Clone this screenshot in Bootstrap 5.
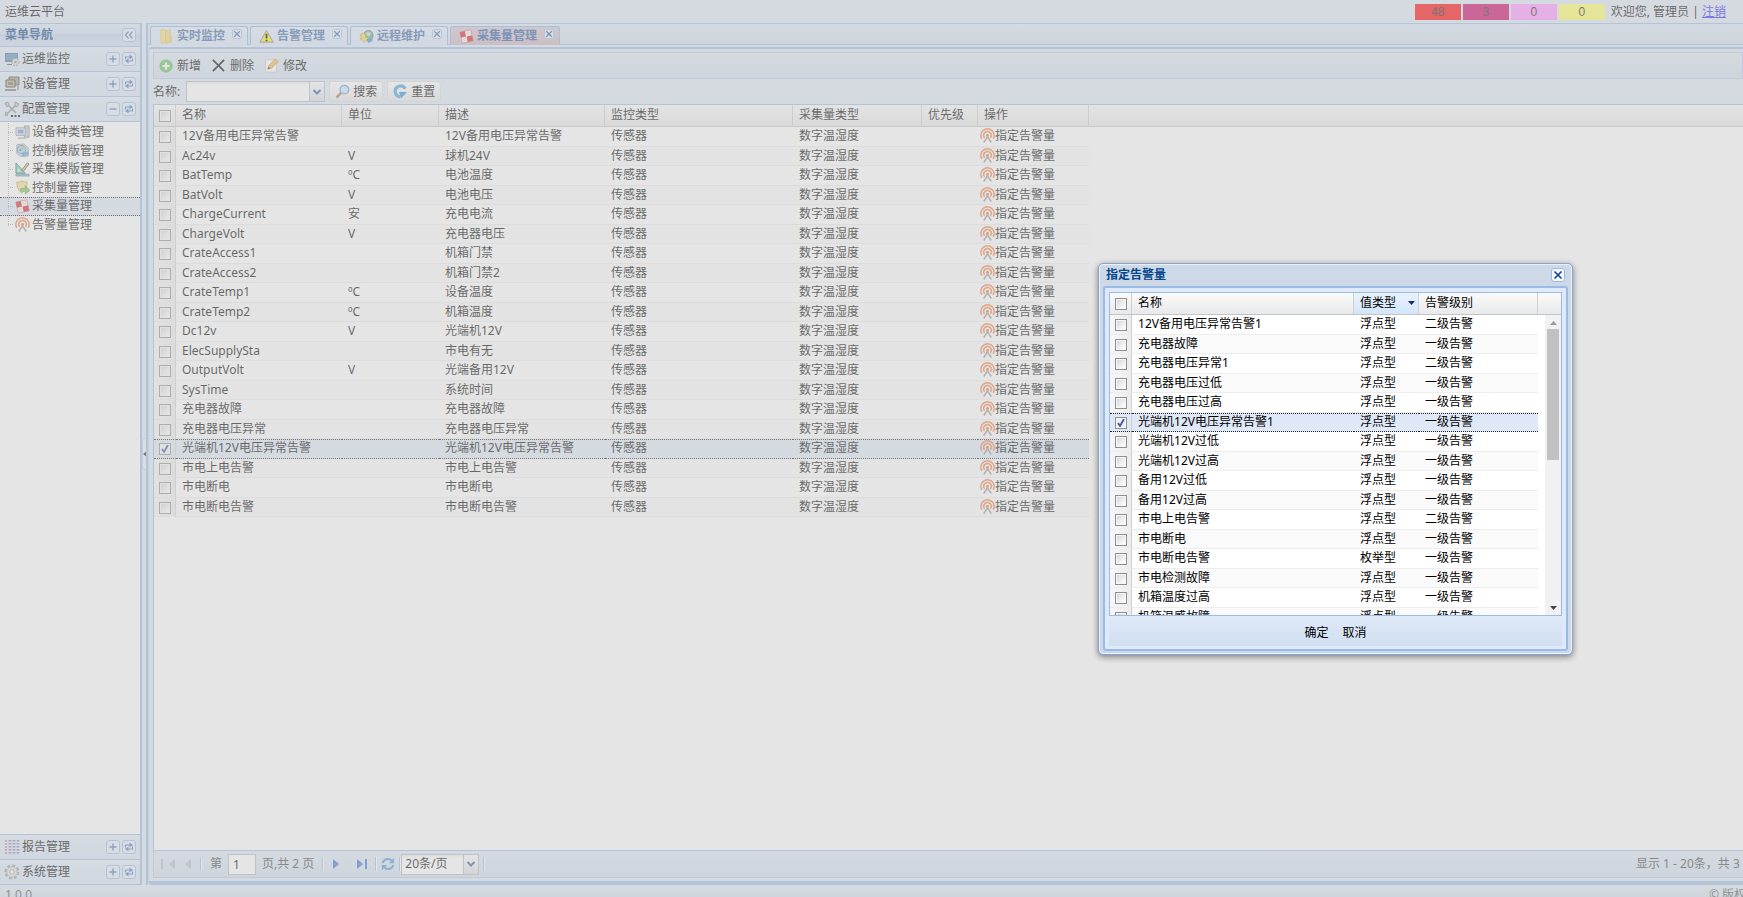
<!DOCTYPE html>
<html lang="zh-CN">
<head>
<meta charset="utf-8">
<meta name="viewport" content="width=device-width, initial-scale=1">
<title>运维云平台</title>
<link rel="stylesheet" href="https://cdn.jsdelivr.net/npm/bootstrap@5.3.0/dist/css/bootstrap.min.css">
<style>
  :root { --line: #99bbe8; --pane: #dfe8f6; --title: #15498b; }
  body { font: 12px/16px "Noto Sans", "Noto Sans CJK SC", sans-serif; color: #000; background: var(--pane); }
  svg { display: block; flex: none; }
  button { font: inherit; color: inherit; }
  .topbar { height: 23px; padding: 0 17px 0 5px; }
  .count { width: 46px; height: 16px; margin-right: 2px; text-align: center; font-family: "Liberation Sans", sans-serif; color: #222; }
  .c-crit { background: #ff0000; } .c-major { background: #cb0064; } .c-minor { background: #ff94ff; } .c-info { background: #ffff68; }
  .topbar a { color: #2a20ff; }

  .side { width: 142px; border-top: 1px solid var(--line); border-right: 2px solid var(--line); background: #fff; }
  .side-title { height: 23px; padding: 0 4px 0 5px; border-bottom: 1px solid var(--line); color: var(--title); font-weight: 700;
    background: linear-gradient(#dae7f6, #cddef3 45%, #bfd4ee 46%, #cddef2); }
  .acc { height: 25px; padding: 0 4px; border-bottom: 1px solid var(--line); background: linear-gradient(#e6effa, #dce8f6 20%, #d7e4f4); }
  .acc-low { height: 26px; border-top: 1px solid var(--line); }
  .acc span { margin: 0 auto 0 2px; }
  .tool { width: 14px; height: 14px; padding: 0; margin-left: 2px; border: 1px solid #9dbbe0; border-radius: 3px; background: #e3eefb; color: #4a7ab8;
    display: flex; align-items: center; justify-content: center; }
  .tree { height: 111px; margin: 1px 0 0; padding: 0; position: relative; }
  .tree::before { content: ""; position: absolute; left: 8px; top: 0; height: 103px; border-left: 1px dotted #aaa; }
  .tree li { flex: 1 1 0; min-height: 0; padding-left: 15px; gap: 2px; border: 1px dotted transparent; border-width: 1px 0; }
  .tree li::before { content: ""; width: 5px; margin: 0 0 0 -7px; border-top: 1px dotted #aaa; }
  .tree li.on { background: #dfe8f6; border-color: #111; }

  .splitter { width: 4px; background: var(--pane); }
  .handle { width: 5px; height: 32px; border-radius: 3px 0 0 3px; background: #e8f0fb; border: 1px solid #c3d3ea; border-right: 0; }
  .main { border-top: 1px solid var(--line); border-left: 2px solid var(--line); overflow: hidden; }
  .tabs { height: 21px; padding: 2px 0 0 2px; gap: 2px; background: linear-gradient(#dbe8f8, #d1dff0); border-bottom: 1px solid var(--line); }
  .tab-x { height: 19px; padding: 0 5px 0 8px; gap: 3px; border: 1px solid #8db2e3; border-bottom: 0; border-radius: 3px 3px 0 0;
    color: #416aa3; font-weight: 700; background: linear-gradient(#e3eefc, #d6e5f8); }
  .tab-x.on { background: linear-gradient(#d4c4d2, #c8b2bc); color: #2a5aa0; }
  .tab-x i { width: 10px; height: 10px; margin: 0 0 4px 4px; border: 1px solid #a8c2e4; border-radius: 2px; background: #e6f0fc; }
  .content { border-top: 2px solid var(--line); border-left: 1px solid #c3d6ef; border-bottom: 4px solid var(--line); margin-top: 2px; padding: 3px 0 3px 4px; border-radius: 4px 0 0 4px; }
  .bar { height: 27px; border: 1px solid #b4c8e4; background: linear-gradient(#dce8f4, #d0deec); padding-left: 5px; gap: 10px; }
  .flat { border: 0; background: none; padding: 0; gap: 4px; }
  .search { height: 25px; }
  .search label { margin-right: 6px; }
  .push { height: 21px; padding: 0 5px; gap: 3px; border: 1px solid #dcdcdc; border-radius: 3px; background: linear-gradient(#fff, #f4f4f4 50%, #e6e6e6); }
  .combo { position: relative; }
  .combo select { appearance: none; height: 21px; border: 1px solid #b5b8c8; border-radius: 0; padding: 0 20px 0 3px; background: linear-gradient(#eee, #fff 4px); width: 139px; color: #000; }
  .combo span { position: absolute; right: 0; top: 0; width: 16px; height: 21px; border: 1px solid #b5b8c8; background: linear-gradient(#fafbfc, #d9dee6); display: flex; align-items: center; justify-content: center; pointer-events: none; }
  .gridbox { border-top: 1px solid var(--line); border-left: 1px solid var(--line); background: #fff; }
  .heads { height: 22px; border-bottom: 1px solid #c5c5c5; background: linear-gradient(#fbfbfb, #e8e9eb); }

  .grid { table-layout: fixed; border-collapse: separate; border-spacing: 0; }
  .grid th { font-weight: 400; height: 21px; padding: 0 0 1px 6px; border-right: 1px solid #cfcfcf; vertical-align: middle; line-height: 16px; }
  .grid td { padding: 1px 0 0 6px; line-height: 15px; border: solid #ededed; border-width: 0 0 1px; white-space: nowrap; vertical-align: top; }
  .grid tr:nth-child(even) td { background: #fafafa; }
  .grid tbody td:first-child { background: linear-gradient(90deg, #f7f7f7, #ececec); border-right: 1px solid #d0d0d0; }
  .grid tr > :first-child { padding-left: 5px; }
  .grid tbody tr.on td, .grid tbody tr.on td:first-child { background: #dfe8f6; border-bottom: 1px dotted #222; border-top: 1px dotted #222; line-height: 15px; padding-top: 0; }
  .grid tr.on input { margin-top: 3px; }
  .list-main { width: 935px; }
  .grid input { appearance: none; display: block; width: 12px; height: 12px; margin: 3px 0 0; border: 1px solid #8e8f8f; border-radius: 0;
    background: linear-gradient(135deg, #cfd3d8, #fbfbfb 80%); box-shadow: inset 0 0 0 1px #f6f6f6; }
  .grid th input { margin: 2px 0 0; }
  .grid input:checked { background: #eef2f8 url("data:image/svg+xml,%3Csvg xmlns='http://www.w3.org/2000/svg' viewBox='0 0 10 10'%3E%3Cpath d='M2 5l2 3 4-7' fill='none' stroke='%234056a0' stroke-width='1.8'/%3E%3C/svg%3E") center/10px; }
  .act { color: #000; text-decoration: none; display: flex; align-items: center; height: 15px; margin-left: -4px; }

  .pager { height: 28px; border: 1px solid #b4c8e4; border-top-color: var(--line); border-right: 0; background: linear-gradient(#dce8f4, #d0deec); padding-left: 7px; color: #444; }
  .pager input { width: 28px; height: 21px; border: 1px solid #b5b8c8; padding: 0 4px; margin: 0 6px; }
  .rule { width: 2px; height: 14px; border-left: 1px solid var(--line); border-right: 1px solid #fff; }
  .pager .combo select { width: 78px; }
  .total { width: 107px; white-space: nowrap; }
  .foot { height: 12px; padding: 2px 0 0 5px; background: linear-gradient(#e2ecf6, #d0deec); color: #555; overflow: hidden; }
  .foot span:last-child { width: 34px; white-space: nowrap; }

  .veil { background: rgba(204, 204, 204, .5); z-index: 10; }
  .dlg { position: absolute; left: 63%; top: 263px; width: 475px; z-index: 20; border: 1px solid #88a6cc; border-radius: 5px; background: #ced9e7;
    box-shadow: 0 2px 6px rgba(0,0,0,.45), inset 0 0 0 1px #e8f0fa; padding: 0 4px 3px; }
  .dlg-title { height: 22px; padding: 0 3px 0 3px; color: #04468c; font-weight: 700; }
  .dlg-title .tool { color: #14409a; background: #f2f7fe; }
  .dlg-body { border: 2px solid var(--line); border-radius: 3px; background: #dfe9f7; padding: 4px 4px 3px; }
  .dlg-grid { border: 1px solid var(--line); background: #fff; height: 324px; overflow: hidden; }
  .dlg-head, .dlg-list { width: 428px; }
  .scroll { height: 301px; overflow: hidden; }
  .track { width: 16px; background: #f1f1f1; padding: 6px 0; }
  .thumb { width: 12px; height: 131px; background: #c1c1c1; }
  .grid .hot { background: linear-gradient(#eaf3fe, #d3e5fb); }
  .hot svg { margin-right: 3px; }
  .acts { height: 30px; padding-top: 4px; gap: 14px; background: linear-gradient(#dfe9f7, #d0dff1); }
</style>
</head>
<body class="vh-100 overflow-hidden d-flex flex-column position-relative">

<svg width="0" height="0" class="position-absolute" aria-hidden="true">
  <symbol id="monitor" viewBox="0 0 16 16"><path d="M1 2h13v9H1z" fill="#4b6f93"/><path d="M2 3h11v6H2z" fill="#5d92bf"/><path d="M3 13h5v1H3z" fill="#556"/><circle cx="11.5" cy="11" r="3.6" fill="#ddd" stroke="#888"  stroke-dasharray="2 1"/><circle cx="11.5" cy="11" r="1.3" fill="#888"/></symbol>
  <symbol id="device" viewBox="0 0 16 16"><path d="M5 1h10v8H5z" fill="#9a9788" stroke="#555"/><path d="M2 4h9v7H2z" fill="#bdb38d" stroke="#45412f"/><path d="M4 6h5v3H4z" fill="#7b785f"/><path d="M1 13h11v2H1z" fill="#777"/><path d="M13 10h2v4h-2z" fill="#999"/></symbol>
  <symbol id="tools" viewBox="0 0 16 16"><path d="M4 4l8 8M12 4l-8 8" stroke="#8a8a8a" stroke-width="1.600"/><path d="M1 2l3-1 1 3-2 2zM11 1l4 2-2 3-2-1zM2 11l2 1-1 3-2-1z" fill="#c4c4c4" stroke="#777" stroke-width=".8"/><path d="M7 14h2v2H7zM10.500 14h2v2h-2zM14 14h2v2h-2z" fill="#111"/></symbol>
  <symbol id="report" viewBox="0 0 16 16"><path d="M2 1v14" stroke="#c77" stroke-width="1.500" stroke-dasharray="2 1"/><path d="M6 1v14M10 1v14M14 1v14" stroke="#8080b8" stroke-width="2.800" stroke-dasharray="1.500 1.500"/></symbol>
  <symbol id="gear" viewBox="0 0 16 16"><circle cx="8" cy="8" r="6.5" fill="none" stroke="#999" stroke-width="2" stroke-dasharray="3 2"/><circle cx="8" cy="8" r="5.3" fill="#e4e4e4" stroke="#aaa"/><circle cx="8" cy="8" r="2.3" fill="#fff" stroke="#999"/></symbol>
  <symbol id="pc" viewBox="0 0 16 16"><path d="M10 1h5v12h-5z" fill="#c5c8cd" stroke="#8b9099"/><path d="M1 3h10v8H1z" fill="#dfe3e8" stroke="#8d97a8"/><path d="M3 5h6v4H3z" fill="#6a9ad6"/><path d="M3 13h9v2H3z" fill="#bbb"/></symbol>
  <symbol id="disc" viewBox="0 0 16 16"><path d="M2 2l7-1 5 4v9H5l-3-3z" fill="#dde6ef" stroke="#8090a5"/><circle cx="7" cy="7" r="4.500" fill="#a8d2f0" stroke="#5987b5"/><circle cx="8" cy="5" r="1.500" fill="#f2a14c"/><circle cx="5.500" cy="7.500" r="1.200" fill="#4fa050"/><path d="M7 10l7-1 1 3-7 3z" fill="#6b9ad0"/></symbol>
  <symbol id="ruler" viewBox="0 0 16 16"><path d="M1 1l10 11H1z" fill="#7bcfb0" stroke="#278064"/><path d="M3 7l3 3H3z" fill="#fff"/><path d="M7 9l6-8 2 1-6 8z" fill="#e8c95c" stroke="#555"/><path d="M1 13h14v2H1z" fill="#9bc" stroke="#456" stroke-width=".6"/></symbol>
  <symbol id="shield" viewBox="0 0 16 16"><path d="M2 2q3 1 5-1 3 2 6 1 0 8-6 12Q2 10 2 2z" fill="#f4e290" stroke="#c8a53c"/><path d="M6 9h5V6l5 5-5 4v-3H6z" fill="#7fc35b" stroke="#4e9133" stroke-width=".7"/></symbol>
  <symbol id="cube" viewBox="0 0 16 16"><g transform="rotate(-12 8 8)"><path d="M2 2h12v12H2z" fill="#fff" stroke="#c66" stroke-width=".7"/><path d="M2 2h5.500v6H2zM8 8h6v6H8z" fill="#d8202c"/><path d="M8.500 3H13v4H8.500zM3 9h4v4H3z" fill="#f6e4e4"/></g></symbol>
  <symbol id="signal" viewBox="0 0 16 16"><path d="M2 11.500A7 7 0 1 1 14 11.500M5 10.500A4 4 0 1 1 11 10.500" fill="none" stroke="#f0844c" stroke-width="1.700"/><circle cx="8" cy="8" r="1.500" fill="#e56a2c"/><path d="M8 9.500l-4 6M8 9.500l4 6" fill="none" stroke="#999" stroke-width="1.700"/></symbol>
  <symbol id="folder" viewBox="0 0 16 16"><path d="M2 1h5v14H2z" fill="#f7dd82" stroke="#e8c866"/><path d="M7 2l5-1v13l-5 1z" fill="#f6d77c" stroke="#e4bf58"/><path d="M11 8h3v6h-3z" fill="#ecc860"/></symbol>
  <symbol id="warn" viewBox="0 0 16 16"><path d="M8 1.500L15 14H1z" fill="#ffee10" stroke="#777" stroke-linejoin="round"/><path d="M8 5v5M8 11.500v1.500" stroke="#000" stroke-width="2"/></symbol>
  <symbol id="globe" viewBox="0 0 16 16"><circle cx="10" cy="6.500" r="5" fill="#6fb04c" stroke="#4a7f9f"/><path d="M8 3l5 1-2 4-3-1z" fill="#b8d9ef"/><path d="M1 6q3-3 6 0v3h3l-4 5-5-4h2z" fill="#f0e050" stroke="#a39b2d" stroke-width=".7"/><path d="M8 12l7-4-1 5-4 2z" fill="#3f8bd0"/></symbol>
  <symbol id="add" viewBox="0 0 16 16"><circle cx="8" cy="8" r="7" fill="#6cc260" stroke="#3c9a3a" stroke-width=".8"/><path d="M8 4v8M4 8h8" stroke="#fff" stroke-width="2.400"/></symbol>
  <symbol id="cross" viewBox="0 0 16 16"><path d="M2 2l12 12M14 2L2 14" stroke="#000" stroke-width="1.800"/></symbol>
  <symbol id="edit" viewBox="0 0 16 16"><path d="M1.500 2h12v13h-12z" fill="#fff" stroke="#c8c8c8"/><path d="M4 12l1-4 7-7 3 3-7 7z" fill="#f5b84c" stroke="#b9822e" stroke-width=".7"/><path d="M4 12l1-3 2 2z" fill="#444"/></symbol>
  <symbol id="find" viewBox="0 0 16 16"><path d="M1.500 14.500L7 9" stroke="#b07a4c" stroke-width="2.600"/><circle cx="10" cy="6" r="4.600" fill="#cfe8fb" stroke="#5a9bd8" stroke-width="1.400"/></symbol>
  <symbol id="reset" viewBox="0 0 16 16"><path d="M13 5A5.700 5.700 0 1 0 8 13.500" fill="none" stroke="#46a2e4" stroke-width="3.400"/><path d="M15 8.500H6.500l2 7z" fill="#318fd8"/></symbol>
  <symbol id="reload" viewBox="0 0 16 16"><path d="M2 7a6 6 0 0 1 10-3M14 9a6 6 0 0 1-10 3" fill="none" stroke="#4b93d6" stroke-width="2.400"/><path d="M15 1v6H9zM1 15V9h6z" fill="#4b93d6"/></symbol>
  <symbol id="swap" viewBox="0 0 10 10"><path d="M1.500 5.500V3H6M8.500 4.500V7H4" fill="none" stroke="currentColor" stroke-width="1.100"/><path d="M5.500 .5L9 3 5.500 5.500zM4.500 4.500L1 7l3.500 2.500z" fill="currentColor"/></symbol>
  <symbol id="plus" viewBox="0 0 10 10"><path d="M5 1.500v7M1.500 5h7" stroke="currentColor" stroke-width="1.400"/></symbol>
  <symbol id="minus" viewBox="0 0 10 10"><path d="M1.500 5h7" stroke="currentColor" stroke-width="1.400"/></symbol>
  <symbol id="fold" viewBox="0 0 10 10"><path d="M4.500 1.500L1.500 5l3 3.500M8.500 1.500L5.500 5l3 3.500" fill="none" stroke="currentColor" stroke-width="1.300"/></symbol>
  <symbol id="shut" viewBox="0 0 10 10"><path d="M1.500 1.500l7 7M8.500 1.500l-7 7" stroke="currentColor" stroke-width="1.600"/></symbol>
  <symbol id="down" viewBox="0 0 10 10"><path d="M1.500 3L5 6.500 8.500 3" fill="none" stroke="#3a5a90" stroke-width="2"/></symbol>
  <symbol id="prev" viewBox="0 0 8 12"><path d="M7 1v10L1 6z" fill="#b4bac6"/></symbol>
  <symbol id="next" viewBox="0 0 8 12"><path d="M1 1v10l6-5z" fill="#3f6fe0"/></symbol>
</svg>

<header class="topbar d-flex align-items-center flex-shrink-0">
  <span class="me-auto">运维云平台</span>
  <span class="count c-crit">48</span><span class="count c-major">3</span><span class="count c-minor">0</span><span class="count c-info">0</span>
  <span class="ms-1">欢迎您, 管理员 | <a href="#">注销</a></span>
</header>

<div class="d-flex flex-grow-1" style="min-height:0">
  <nav class="side d-flex flex-column flex-shrink-0">
    <div class="side-title d-flex align-items-center justify-content-between">菜单导航
      <button class="tool" aria-label="收起"><svg width="10" height="10"><use href="#fold"/></svg></button></div>
    <div class="acc d-flex align-items-center" data-icon="monitor">运维监控</div>
    <div class="acc d-flex align-items-center" data-icon="device">设备管理</div>
    <div class="acc d-flex align-items-center" data-icon="tools" data-open>配置管理</div>
    <div class="flex-grow-1">
      <ul class="tree list-unstyled d-flex flex-column" id="tree"></ul>
    </div>
    <div class="acc acc-low d-flex align-items-center" data-icon="report">报告管理</div>
    <div class="acc d-flex align-items-center" data-icon="gear">系统管理</div>
  </nav>

  <div class="splitter d-flex align-items-center flex-shrink-0">
    <div class="handle d-flex align-items-center"><svg width="4" height="6" viewBox="0 0 4 6"><path d="M4 0v6L0 3z" fill="#222"/></svg></div>
  </div>

  <main class="main d-flex flex-column flex-grow-1">
    <div class="tabs d-flex flex-shrink-0" id="tabs"></div>
    <section class="content d-flex flex-column flex-grow-1" style="min-height:0">
      <div class="bar d-flex align-items-center flex-shrink-0">
        <button class="flat d-flex align-items-center"><svg width="14" height="14"><use href="#add"/></svg>新增</button>
        <button class="flat d-flex align-items-center"><svg width="15" height="15"><use href="#cross"/></svg>删除</button>
        <button class="flat d-flex align-items-center"><svg width="15" height="15"><use href="#edit"/></svg>修改</button>
      </div>
      <form class="search d-flex align-items-center flex-shrink-0">
        <label for="nm">名称:</label>
        <div class="combo"><select id="nm"><option></option></select><span><svg width="10" height="10"><use href="#down"/></svg></span></div>
        <button type="button" class="push d-flex align-items-center ms-1"><svg width="15" height="15"><use href="#find"/></svg>搜索</button>
        <button type="button" class="push d-flex align-items-center ms-1"><svg width="15" height="15"><use href="#reset"/></svg>重置</button>
      </form>
      <div class="gridbox flex-grow-1 overflow-hidden">
        <div class="heads">
          <table class="grid list-main"><colgroup><col width="22"><col width="166"><col width="97"><col width="166"><col width="188"><col width="129"><col width="56"><col width="111"></colgroup>
            <thead><tr><th><input type="checkbox" aria-label="全选"></th><th>名称</th><th>单位</th><th>描述</th><th>监控类型</th><th>采集量类型</th><th>优先级</th><th>操作</th></tr></thead></table>
        </div>
        <table class="grid list-main" height="390"><colgroup><col width="22"><col width="166"><col width="97"><col width="166"><col width="188"><col width="129"><col width="56"><col width="111"></colgroup>
          <tbody id="rows"></tbody></table>
      </div>
      <div class="pager d-flex align-items-center flex-shrink-0">
        <button class="flat d-flex gap-1" aria-label="首页"><svg width="3" height="12" viewBox="0 0 3 12"><path d="M0 1h2v10H0z" fill="#b4bac6"/></svg><svg width="8" height="12"><use href="#prev"/></svg></button>
        <button class="flat ms-2" aria-label="上一页"><svg width="8" height="12"><use href="#prev"/></svg></button>
        <div class="rule mx-2"></div>
        <label for="pg">第</label><input id="pg" type="text" value="1"><span>页,共 2 页</span>
        <div class="rule mx-2"></div>
        <button class="flat" aria-label="下一页"><svg width="8" height="12"><use href="#next"/></svg></button>
        <button class="flat d-flex gap-0 ms-3" aria-label="末页"><svg width="8" height="12"><use href="#next"/></svg><svg width="3" height="12" viewBox="0 0 3 12"><path d="M1 1h2v10H1z" fill="#3f6fe0"/></svg></button>
        <div class="rule ms-2 me-1"></div>
        <button class="flat" aria-label="刷新"><svg width="14" height="14"><use href="#reload"/></svg></button>
        <div class="rule ms-1"></div>
        <div class="combo"><select aria-label="每页条数"><option>20条/页</option></select><span><svg width="10" height="10"><use href="#down"/></svg></span></div>
        <div class="rule ms-1"></div>
        <div class="total ms-auto">显示 1 - 20条，共 3</div>
      </div>
    </section>
  </main>
</div>
<footer class="foot d-flex justify-content-between flex-shrink-0"><span>1.0.0</span><span>© 版权</span></footer>

<div class="veil position-absolute top-0 start-0 w-100 h-100"></div>

<div class="dlg" role="dialog" aria-labelledby="dt">
  <div class="dlg-title d-flex align-items-center justify-content-between"><span id="dt">指定告警量</span>
    <button class="tool" aria-label="关闭"><svg width="10" height="10"><use href="#shut"/></svg></button></div>
  <div class="dlg-body">
    <div class="dlg-grid">
      <div class="heads">
        <table class="grid dlg-head"><colgroup><col width="22"><col width="222"><col width="65"><col width="119"></colgroup>
          <thead><tr><th><input type="checkbox" aria-label="全选"></th><th>名称</th><th class="hot"><div class="d-flex align-items-center justify-content-between">值类型<svg width="7" height="4" viewBox="0 0 7 4"><path d="M0 0h7L3.500 4z" fill="#15306c"/></svg></div></th><th>告警级别</th></tr></thead></table>
      </div>
      <div class="scroll d-flex justify-content-between">
        <table class="grid dlg-list" height="312"><colgroup><col width="22"><col width="222"><col width="65"><col width="119"></colgroup><tbody id="alarms"></tbody></table>
        <div class="track d-flex flex-column align-items-center">
          <svg width="7" height="4" viewBox="0 0 7 4"><path d="M0 4h7L3.500 0z" fill="#999"/></svg>
          <div class="thumb mt-1 mb-auto"></div>
          <svg width="7" height="4" viewBox="0 0 7 4"><path d="M0 0h7L3.500 4z" fill="#444"/></svg>
        </div>
      </div>
    </div>
    <div class="acts d-flex align-items-center justify-content-center"><button class="flat">确定</button><button class="flat">取消</button></div>
  </div>
</div>

<script>
  const icon = (n, s) => `<svg width="${s}" height="${s}"><use href="#${n}"/></svg>`;
  document.querySelectorAll('.acc').forEach(a => {
    a.innerHTML = `${icon(a.dataset.icon, 16)}<span>${a.textContent}</span>` +
      `<button class="tool" aria-label="展开">${icon('open' in a.dataset ? 'minus' : 'plus', 10)}</button><button class="tool" aria-label="刷新">${icon('swap', 10)}</button>`;
  });
  document.getElementById('tree').innerHTML = [['pc', '设备种类管理'], ['disc', '控制模版管理'], ['ruler', '采集模版管理'], ['shield', '控制量管理'], ['cube', '采集量管理'], ['signal', '告警量管理']]
    .map(([i, t]) => `<li class="d-flex align-items-center${t === '采集量管理' ? ' on' : ''}">${icon(i, 15)}<span>${t}</span></li>`).join('');
  document.getElementById('tabs').innerHTML = [['folder', '实时监控'], ['warn', '告警管理'], ['globe', '远程维护'], ['cube', '采集量管理']]
    .map(([i, t], k) => `<button class="tab-x d-flex align-items-center${k === 3 ? ' on' : ''}">${icon(i, 15)}${t}<i>${icon('shut', 8)}</i></button>`).join('');

  const rows = [['12V备用电压异常告警', '', '12V备用电压异常告警'], ['Ac24v', 'V', '球机24V'], ['BatTemp', 'ºC', '电池温度'], ['BatVolt', 'V', '电池电压'],
    ['ChargeCurrent', '安', '充电电流'], ['ChargeVolt', 'V', '充电器电压'], ['CrateAccess1', '', '机箱门禁'], ['CrateAccess2', '', '机箱门禁2'],
    ['CrateTemp1', 'ºC', '设备温度'], ['CrateTemp2', 'ºC', '机箱温度'], ['Dc12v', 'V', '光端机12V'], ['ElecSupplySta', '', '市电有无'],
    ['OutputVolt', 'V', '光端备用12V'], ['SysTime', '', '系统时间'], ['充电器故障', '', '充电器故障'], ['充电器电压异常', '', '充电器电压异常'],
    ['光端机12V电压异常告警', '', '光端机12V电压异常告警'], ['市电上电告警', '', '市电上电告警'], ['市电断电', '', '市电断电'], ['市电断电告警', '', '市电断电告警']];
  document.getElementById('rows').innerHTML = rows.map(([n, u, d], k) =>
    `<tr${k === 16 ? ' class="on"' : ''}><td><input type="checkbox" aria-label="${n}"${k === 16 ? ' checked' : ''}></td><td>${n}</td><td>${u}</td><td>${d}</td><td>传感器</td><td>数字温湿度</td><td></td><td><a class="act" href="#">${icon('signal', 15)}指定告警量</a></td></tr>`).join('');

  const alarms = [['12V备用电压异常告警1', 2], ['充电器故障', 1], ['充电器电压异常1', 2], ['充电器电压过低', 1], ['充电器电压过高', 1], ['光端机12V电压异常告警1', 1],
    ['光端机12V过低', 1], ['光端机12V过高', 1], ['备用12V过低', 1], ['备用12V过高', 1], ['市电上电告警', 2], ['市电断电', 1], ['市电断电告警', 1], ['市电检测故障', 1], ['机箱温度过高', 1], ['机箱温感故障', 1]];
  document.getElementById('alarms').innerHTML = alarms.map(([n, l], k) =>
    `<tr${k === 5 ? ' class="on"' : ''}><td><input type="checkbox" aria-label="${n}"${k === 5 ? ' checked' : ''}></td><td>${n}</td><td>${k === 12 ? '枚举型' : '浮点型'}</td><td>${l === 2 ? '二' : '一'}级告警</td></tr>`).join('');
</script>
<script src="https://cdn.jsdelivr.net/npm/bootstrap@5.3.0/dist/js/bootstrap.bundle.min.js"></script>
</body>
</html>
